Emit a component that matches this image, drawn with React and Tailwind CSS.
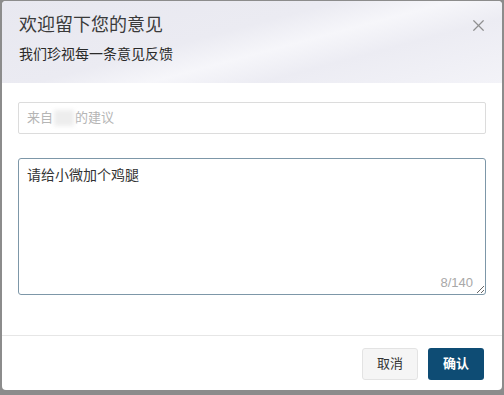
import React from 'react';
import { X } from 'lucide-react';

const font = { fontFamily: '"Liberation Sans", "Noto Sans CJK SC", sans-serif' };

const App = () => {
    return (
        <div className="w-[504px] h-[395px] bg-[#8c8c8c] pl-[2px] pr-[2px] pt-[1px] pb-[5px]" style={font}>
            <div className="h-full bg-white rounded-[4px] overflow-hidden flex flex-col">
                {/* header */}
                <div className="h-[82px] px-[17px] pt-[12px] bg-[linear-gradient(165deg,#e8e8f0_0%,#ebebf2_42%,#f6f6fa_56%,#ececf3_70%,#f3f3f8_100%)]">
                    <div className="flex items-center justify-between">
                        <h1 className="text-[18px] leading-[24px] text-[#3a3a3a]">欢迎留下您的意见</h1>
                        <X size={19} strokeWidth={1.5} className="text-[#8f8f8f] mr-[-3px]" />
                    </div>
                    <p className="mt-[8px] text-[14px] leading-[19px] text-[#2a2a2a]">我们珍视每一条意见反馈</p>
                </div>

                {/* body */}
                <div className="px-[16px] pt-[19px]">
                    <div className="h-[32px] border border-[#dcdcdc] rounded-[2px] flex items-center px-[8px] text-[13px] text-[#b5b5b5]">
                        <span>来自</span>
                        <span className="inline-block w-[20px] h-[16px] mx-[1px] bg-[#ededed] blur-[2px]" />
                        <span>的建议</span>
                    </div>

                    <div className="relative mt-[24px]">
                        <textarea
                            className="block w-full h-[137px] border border-[#7d97a8] rounded-[3px] px-[8px] py-[6px] text-[14px] leading-[20px] text-[#333] outline-none"
                            defaultValue="请给小微加个鸡腿"
                        />
                        <span className="absolute right-[13px] bottom-[3px] text-[13px] text-[#a8a8a8]">8/140</span>
                    </div>
                </div>

                {/* footer */}
                <div className="mt-auto border-t border-[#e6e6e6] h-[55px] flex justify-end items-start pt-[12px] pr-[18px] gap-[10px]">
                    <button className="w-[56px] h-[32px] rounded-[3px] bg-[#f5f5f5] border border-[#e3e3e3] text-[13px] text-[#333]">取消</button>
                    <button className="w-[56px] h-[32px] rounded-[3px] bg-[#0e4c74] text-[13px] font-bold text-white">确认</button>
                </div>
            </div>
        </div>
    );
};

export default App;
